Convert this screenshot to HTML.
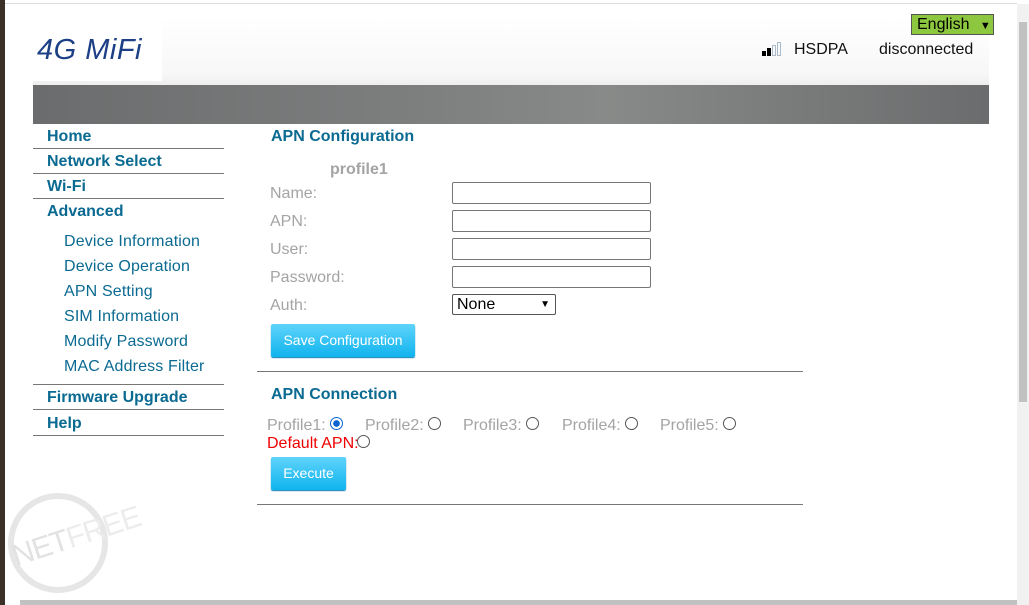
<!DOCTYPE html>
<html><head><meta charset="utf-8"><style>
*{margin:0;padding:0;box-sizing:border-box}
body{width:1029px;height:605px;overflow:hidden;background:#fff;font-family:"Liberation Sans",Arial,sans-serif;position:relative}
.a{position:absolute}
.nav{color:#0a6a91;font-weight:bold;font-size:16px}
.sub{color:#0a6a91;font-size:16px;letter-spacing:0.15px}
.lbl{color:#a4a4a4;font-size:16px}
.inp{position:absolute;width:199px;height:22px;border:1px solid #767676;border-radius:2px;background:#fff}
.btn{position:absolute;background:linear-gradient(#5fd3fb,#10b4ee);color:#fff;font-size:14px;text-align:center;border-radius:2px;box-shadow:0 1px 1px #0a7fb0}
.hr{position:absolute;height:1px;background:#777}
.radio{position:absolute;width:13px;height:13px;border:1px solid #555;border-radius:50%}
</style></head><body>
<div class="a" style="left:0;top:0;width:5px;height:605px;background:#3a3028"></div>
<div class="a" style="left:5px;top:0;width:1012px;height:4px;background:#fff;border-bottom:1px solid #ddd"></div>
<div class="a" style="left:33px;top:17px;width:956px;height:68px;background:linear-gradient(#fff,#f7f7f7 85%,#eee)"></div>
<div class="a" style="left:33px;top:17px;width:129px;height:64px;background:#fff"></div>
<div class="a" style="left:37px;top:34px;font-family:'Liberation Sans',sans-serif;font-style:italic;font-size:29px;color:#1c3f86;letter-spacing:0.5px">4G MiFi</div>
<div class="a" style="left:33px;top:85px;width:956px;height:39px;background:linear-gradient(90deg,#6a6c6d,#7d7f7f 40%,#888a89 60%,#6a6c6d)"></div>
<div class="a" style="left:911px;top:14px;width:83px;height:21px;background:#8dc63f;border:1px solid #555;font-size:16px;padding-left:5px;line-height:19px">English <span style="font-size:11px;margin-left:6px">&#9660;</span></div>
<div class="a" style="left:762px;top:42px">
<span class="a" style="left:0;top:9px;width:4px;height:5px;background:#000"></span>
<span class="a" style="left:5px;top:6px;width:4px;height:8px;background:#000"></span>
<span class="a" style="left:10px;top:3px;width:4px;height:11px;border:1px solid #abc"></span>
<span class="a" style="left:15px;top:0;width:4px;height:14px;border:1px solid #abc"></span>
</div>
<div class="a" style="left:794px;top:41px;font-size:16px;color:#111">HSDPA</div>
<div class="a" style="left:879px;top:41px;font-size:16px;color:#111">disconnected</div>
<div class="a" style="left:1017px;top:4px;width:12px;height:601px;background:#f1f1f1"></div>
<div class="a" style="left:1019px;top:22px;width:8px;height:380px;background:#c1c1c1"></div>
<div class="a" style="left:20px;top:600px;width:997px;height:5px;background:#c1c1c1"></div>

<div class="a nav" style="left:47px;top:128px">Home</div>
<div class="hr" style="left:33px;top:148px;width:191px"></div>
<div class="a nav" style="left:47px;top:153px">Network Select</div>
<div class="hr" style="left:33px;top:173px;width:191px"></div>
<div class="a nav" style="left:47px;top:178px">Wi-Fi</div>
<div class="hr" style="left:33px;top:198px;width:191px"></div>
<div class="a nav" style="left:47px;top:203px">Advanced</div>
<div class="a sub" style="left:64px;top:233px">Device Information</div>
<div class="a sub" style="left:64px;top:258px">Device Operation</div>
<div class="a sub" style="left:64px;top:283px">APN Setting</div>
<div class="a sub" style="left:64px;top:308px">SIM Information</div>
<div class="a sub" style="left:64px;top:333px">Modify Password</div>
<div class="a sub" style="left:64px;top:358px">MAC Address Filter</div>
<div class="hr" style="left:33px;top:384px;width:191px"></div>
<div class="a nav" style="left:47px;top:389px">Firmware Upgrade</div>
<div class="hr" style="left:33px;top:409px;width:191px"></div>
<div class="a nav" style="left:47px;top:415px">Help</div>
<div class="hr" style="left:33px;top:435px;width:191px"></div>

<div class="a nav" style="left:271px;top:128px">APN Configuration</div>
<div class="a" style="left:330px;top:161px;font-weight:bold;color:#a4a4a4;font-size:16px">profile1</div>
<div class="a lbl" style="left:270px;top:185px">Name:</div>
<div class="a lbl" style="left:270px;top:213px">APN:</div>
<div class="a lbl" style="left:270px;top:241px">User:</div>
<div class="a lbl" style="left:270px;top:269px">Password:</div>
<div class="a lbl" style="left:270px;top:297px">Auth:</div>
<div class="inp" style="left:452px;top:182px"></div>
<div class="inp" style="left:452px;top:210px"></div>
<div class="inp" style="left:452px;top:238px"></div>
<div class="inp" style="left:452px;top:266px"></div>
<div class="a" style="left:452px;top:294px;width:104px;height:21px;border:1px solid #555;border-radius:2px;font-size:16px;padding-left:4px;line-height:19px">None<span style="position:absolute;right:5px;font-size:10px">&#9660;</span></div>
<div class="btn" style="left:271px;top:324px;width:144px;height:33px;line-height:33px">Save Configuration</div>
<div class="hr" style="left:257px;top:371px;width:546px"></div>
<div class="a nav" style="left:271px;top:386px">APN Connection</div>
<div class="a lbl" style="left:267px;top:417px">Profile1:</div>
<span class="radio" style="left:330px;top:417px;border-color:#0a64d0;background:radial-gradient(#0a64d0 40%,#fff 45%)"></span>
<div class="a lbl" style="left:365px;top:417px">Profile2:</div>
<span class="radio" style="left:428px;top:417px"></span>
<div class="a lbl" style="left:463px;top:417px">Profile3:</div>
<span class="radio" style="left:526px;top:417px"></span>
<div class="a lbl" style="left:562px;top:417px">Profile4:</div>
<span class="radio" style="left:625px;top:417px"></span>
<div class="a lbl" style="left:660px;top:417px">Profile5:</div>
<span class="radio" style="left:723px;top:417px"></span>
<div class="a" style="left:267px;top:435px;font-size:16px;color:#e00">Default APN:</div>
<span class="radio" style="left:357px;top:435px"></span>
<div class="btn" style="left:271px;top:457px;width:75px;height:33px;line-height:33px">Execute</div>
<div class="hr" style="left:257px;top:504px;width:546px"></div>

<div class="a" style="left:8px;top:493px;width:100px;height:100px;border:6px solid #e6e6e6;border-radius:50%"></div>
<div class="a" style="left:10px;top:520px;font-size:30px;color:#e2e2e2;transform:rotate(-18deg);letter-spacing:-1px">NET<span style="color:#ececec">FREE</span></div>
</body></html>
